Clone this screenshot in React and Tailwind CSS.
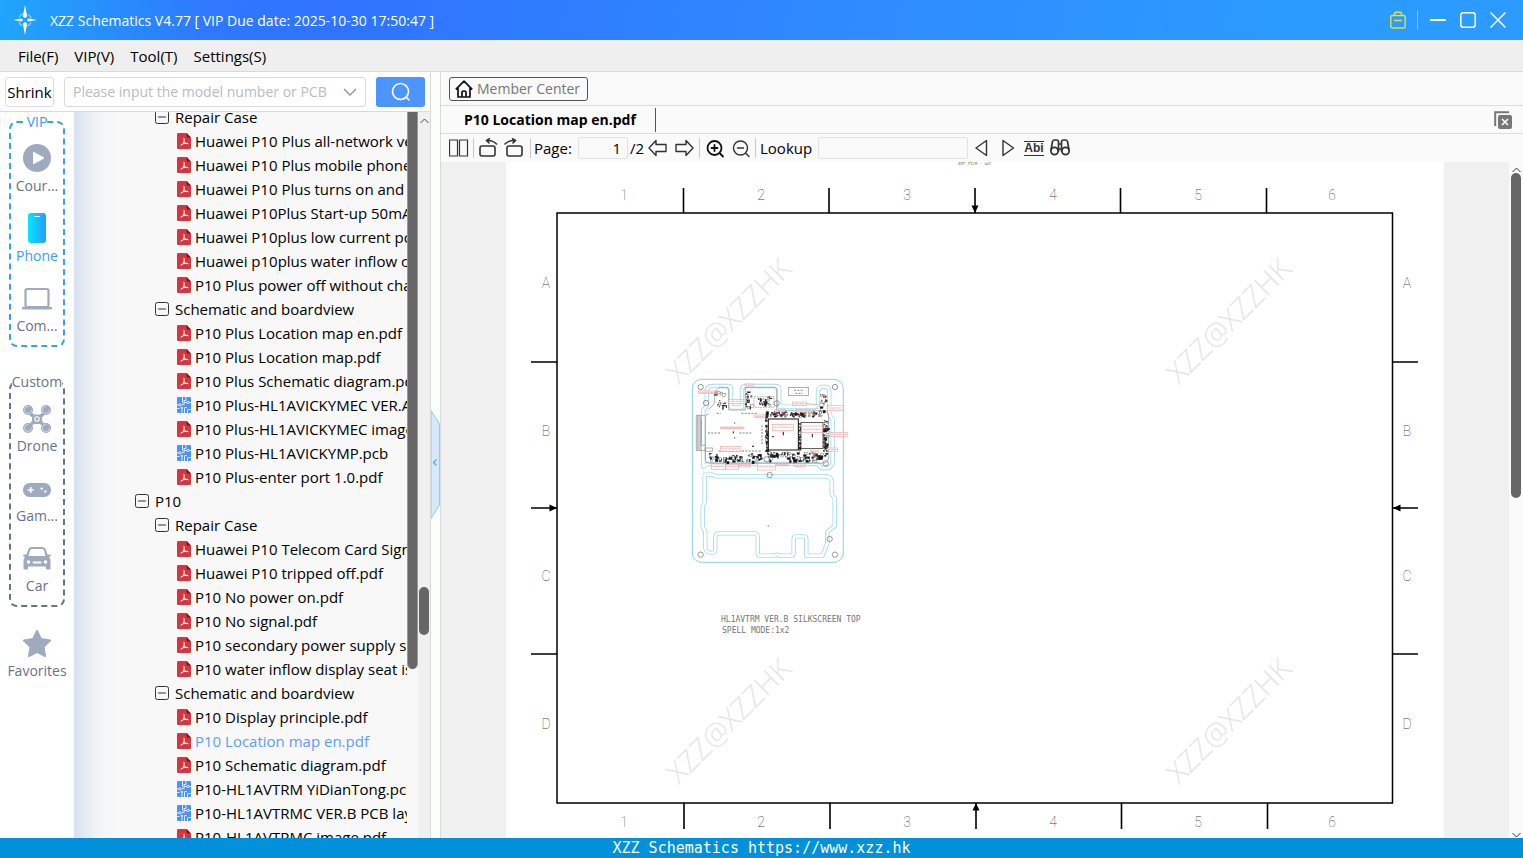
import { useState } from 'react';
import clsx from 'clsx';

const TREE = [
  { type: 'group', depth: 1, name: 'Repair Case' },
  { type: 'pdf', name: 'Huawei P10 Plus all-network version does not turn on.pdf' },
  { type: 'pdf', name: 'Huawei P10 Plus mobile phone no signal.pdf' },
  { type: 'pdf', name: 'Huawei P10 Plus turns on and then off.pdf' },
  { type: 'pdf', name: 'Huawei P10Plus Start-up 50mA.pdf' },
  { type: 'pdf', name: 'Huawei P10plus low current power on.pdf' },
  { type: 'pdf', name: 'Huawei p10plus water inflow code.pdf' },
  { type: 'pdf', name: 'P10 Plus power off without charging.pdf' },
  { type: 'group', depth: 1, name: 'Schematic and boardview' },
  { type: 'pdf', name: 'P10 Plus Location map en.pdf' },
  { type: 'pdf', name: 'P10 Plus Location map.pdf' },
  { type: 'pdf', name: 'P10 Plus Schematic diagram.pdf' },
  { type: 'pcb', name: 'P10 Plus-HL1AVICKYMEC VER.A.pcb' },
  { type: 'pdf', name: 'P10 Plus-HL1AVICKYMEC image.pdf' },
  { type: 'pcb', name: 'P10 Plus-HL1AVICKYMP.pcb' },
  { type: 'pdf', name: 'P10 Plus-enter port 1.0.pdf' },
  { type: 'group', depth: 0, name: 'P10' },
  { type: 'group', depth: 1, name: 'Repair Case' },
  { type: 'pdf', name: 'Huawei P10 Telecom Card Signal.pdf' },
  { type: 'pdf', name: 'Huawei P10 tripped off.pdf' },
  { type: 'pdf', name: 'P10 No power on.pdf' },
  { type: 'pdf', name: 'P10 No signal.pdf' },
  { type: 'pdf', name: 'P10 secondary power supply short.pdf' },
  { type: 'pdf', name: 'P10 water inflow display seat is bad.pdf' },
  { type: 'group', depth: 1, name: 'Schematic and boardview' },
  { type: 'pdf', name: 'P10 Display principle.pdf' },
  { type: 'pdf', name: 'P10 Location map en.pdf' },
  { type: 'pdf', name: 'P10 Schematic diagram.pdf' },
  { type: 'pcb', name: 'P10-HL1AVTRM YiDianTong.pcb' },
  { type: 'pcb', name: 'P10-HL1AVTRMC VER.B PCB layer.pcb' },
  { type: 'pdf', name: 'P10-HL1AVTRMC image.pdf' },
];

/* ---------- icons ---------- */

function Logo() {
  return (
    <svg width="24" height="30" viewBox="0 0 24 30" fill="#fff">
      <path d="M12 0 14.2 11.5 12 13 9.8 11.5Z" />
      <path d="M12 30 14.2 18.5 12 17 9.8 18.5Z" />
      <path d="M0 15 8.5 13.4 10 15 8.5 16.6Z" />
      <path d="M24 15 15.5 13.4 14 15 15.5 16.6Z" />
      <circle cx="12" cy="15" r="6.5" fill="none" stroke="#fff" strokeOpacity=".45" strokeWidth="1.5" strokeDasharray="5 5.2" strokeDashoffset="-2.5" />
    </svg>
  );
}

function PdfIcon() {
  return (
    <svg width="14" height="16" viewBox="0 0 14 16" className="shrink-0">
      <path d="M1.2 0H9.6L14 4.4V14.8Q14 16 12.8 16H1.2Q0 16 0 14.8V1.2Q0 0 1.2 0Z" fill="#d4373f" />
      <path d="M9.6 0 14 4.4H10.4Q9.6 4.4 9.6 3.6Z" fill="#8d0e16" />
      <path d="M7 5.2Q7.7 6.8 6.9 8.900 5.9 11.2 4 12.300M6.900 8.800Q8.200 10.700 11 10.800M4.200 11.500Q6.500 10.200 10.500 10.300" fill="none" stroke="#fff" strokeWidth="1" strokeLinecap="round" />
    </svg>
  );
}

function PcbIcon() {
  return (
    <svg width="14" height="16" viewBox="0 0 14 16" className="shrink-0">
      <rect width="14" height="16" rx="1.2" fill="#4a90ff" />
      <g fill="none" stroke="#fff" strokeWidth=".8">
        <path d="M5.500 0V5.500M9 0V3.500H7V7M0 8H2M4.300 7.500H7.500M7.500 16V10.500H10M12 5.500H14M5 16V11.500M0 11.500H2.500M10.500 16V12.500H14M7 5.500H10" />
        <circle cx="3.200" cy="7.700" r="1.100" />
        <circle cx="11" cy="5.500" r="1.100" />
        <circle cx="4.800" cy="10.900" r=".9" />
      </g>
    </svg>
  );
}

function CourseIcon() {
  return (
    <svg width="30" height="30" viewBox="0 0 30 30">
      <circle cx="15" cy="15" r="14" fill="#a0aabf" />
      <path d="M11 9.6Q11 8.4 12 9L21.6 14.3Q22.6 15 21.6 15.7L12 21Q11 21.6 11 20.4Z" fill="#fff" />
    </svg>
  );
}

function PhoneIcon() {
  return (
    <svg width="30" height="30" viewBox="0 0 30 30">
      <defs>
        <linearGradient id="phoneFill">
          <stop offset="0" stopColor="#00e8ff" />
          <stop offset="1" stopColor="#2b9bff" />
        </linearGradient>
      </defs>
      <rect x="6" y="0" width="18" height="30" rx="3" fill="url(#phoneFill)" />
      <path d="M12.8 3.5H17.2" stroke="#fff" strokeWidth="1.2" strokeLinecap="round" />
    </svg>
  );
}

function ComputerIcon() {
  return (
    <svg width="30" height="30" viewBox="0 0 30 30">
      <rect x="3.5" y="6" width="23" height="18" rx="1.5" fill="none" stroke="#a0aabf" strokeWidth="2.200" />
      <path d="M0 24H30V25.5Q30 26.5 29 26.5H1Q0 26.5 0 25.5Z" fill="#a0aabf" />
    </svg>
  );
}

function DroneIcon() {
  return (
    <svg width="30" height="30" viewBox="0 0 30 30">
      <path d="M6 7.5 12 12H18L24 7.500 25 9 19.500 14.500V18L25 24 24 25.500 18 20.500H12L6 25.500 5 24 10.500 18V14.500L5 9Z" fill="#a0aabf" stroke="#a0aabf" strokeLinejoin="round" strokeWidth="1" />
      {[[6, 7], [24, 7], [6, 25], [24, 25]].map(([x, y]) => (
        <g key={`${x}-${y}`}>
          <circle cx={x} cy={y} r="5" fill="#a0aabf" />
          <circle cx={x} cy={y} r="3.600" fill="none" stroke="#fff" strokeOpacity=".7" strokeWidth=".7" strokeDasharray="17 6" />
        </g>
      ))}
      <circle cx="15" cy="16" r="2.2" fill="none" stroke="#fff" strokeWidth="1.1" />
    </svg>
  );
}

function GameIcon() {
  return (
    <svg width="30" height="30" viewBox="0 0 30 30">
      <rect x="1" y="10" width="28" height="14" rx="6.5" fill="#a0aabf" />
      <path d="M8.7 14V20M5.7 17H11.7" stroke="#fff" strokeWidth="1.6" />
      <circle cx="19.7" cy="15.600" r="1.2" fill="#fff" />
      <circle cx="23.3" cy="18.600" r="1.2" fill="#fff" />
    </svg>
  );
}

function CarIcon() {
  return (
    <svg width="30" height="30" viewBox="0 0 30 30">
      <path d="M9.500 4H20.500Q23 4 23.800 6.500L25.500 11.500H28.500Q29.500 13.500 27 14 28.500 15.500 28.500 17.500V25.500Q28.500 26.500 27.500 26.500H25Q24 26.500 24 25.500V23.500H6V25.500Q6 26.500 5 26.500H2.500Q1.500 26.500 1.500 25.500V17.500Q1.500 15.500 3 14 .5 13.500 1.500 11.500H4.500L6.200 6.500Q7 4 9.500 4Z" fill="#a0aabf" />
      <path d="M10 6H20Q21.5 6 22 7.5L23.6 13H6.4L8 7.5Q8.5 6 10 6Z" fill="#fff" />
      <circle cx="6.5" cy="19" r="1.8" fill="#fff" />
      <circle cx="23.5" cy="19" r="1.8" fill="#fff" />
      <path d="M11.5 19.500H18.5" stroke="#fff" strokeWidth="2" strokeLinecap="round" />
    </svg>
  );
}

function StarIcon() {
  return (
    <svg width="30" height="30" viewBox="0 0 30 30">
      <path d="M15 3 19 11.1 28 12.500 21.5 18.9 23 28 15 23.8 7 28 8.5 18.9 2 12.500 11 11.1Z" fill="#a0aabf" stroke="#a0aabf" strokeWidth="2" strokeLinejoin="round" />
    </svg>
  );
}

function Stroke({ d, children, w = 20, width = 1.6, color = '#333' }) {
  return (
    <svg width={w} height="20" viewBox={`0 0 ${w} 20`} fill="none" stroke={color} strokeWidth={width} strokeLinejoin="round" strokeLinecap="round">
      {d && <path d={d} />}
      {children}
    </svg>
  );
}

/* ---------- side bar ---------- */

function Category({ label, icon, active, onClick }) {
  return (
    <button onClick={onClick} className={clsx('flex w-full flex-col items-center text-[14px]', active ? 'text-[#3d9bff]' : 'text-[#67738a]')}>
      {icon}
      <span className="h-[26px] leading-[26px]">{label}</span>
    </button>
  );
}

function SideBar() {
  const [active, setActive] = useState('Phone');
  const item = (label, icon) => (
    <Category key={label} label={label} icon={icon} active={active === label} onClick={() => setActive(label)} />
  );

  return (
    <nav className="w-[74px] shrink-0 bg-white">
      <fieldset className="mx-auto flex w-[56px] flex-col gap-[14px] rounded-[8px] border-2 border-dashed border-[#3d9bff] pt-[11px] pb-[6px]">
        <legend className="mx-auto text-[14px] leading-5 text-[#3d9bff]">VIP</legend>
        {item('Cour...', <CourseIcon />)}
        {item('Phone', <PhoneIcon />)}
        {item('Com...', <ComputerIcon />)}
      </fieldset>
      <fieldset className="mx-auto mt-[25px] flex w-[56px] flex-col gap-[14px] rounded-[8px] border-2 border-dashed border-[#67738a] pt-[11px] pb-[6px]">
        <legend className="mx-auto text-[14px] leading-5 text-[#67738a]">Custom</legend>
        {item('Drone', <DroneIcon />)}
        {item('Gam...', <GameIcon />)}
        {item('Car', <CarIcon />)}
      </fieldset>
      <div className="mt-[21px]">{item('Favorites', <StarIcon />)}</div>
    </nav>
  );
}

/* ---------- file tree ---------- */

function FileTree() {
  const [selected, setSelected] = useState('P10 Location map en.pdf');

  return (
    <div className="min-w-0 flex-1 overflow-hidden bg-[#f8f8f8] bg-[linear-gradient(90deg,#d6e1f2_0px,#e6ebf4_12px,#f3f5f8_26px,#f8f8f8_42px)]">
      <ul className="-mt-[7px]">
        {TREE.map((row, i) => (
          <li key={i} className="h-6">
            {row.type === 'group' ? (
              <button className={clsx('flex h-6 items-center gap-[6px] whitespace-nowrap', row.depth ? 'pl-[81px]' : 'pl-[61px]')}>
                <svg width="14" height="14" viewBox="0 0 14 14" fill="none" stroke="#333">
                  <rect x=".5" y=".5" width="13" height="13" rx="2" />
                  <path d="M3 7H11" />
                </svg>
                {row.name}
              </button>
            ) : (
              <button
                onClick={() => setSelected(row.name)}
                className={clsx('flex h-6 items-center gap-1 pl-[103px] whitespace-nowrap', selected === row.name && 'text-[#5b9dff]')}
              >
                {row.type === 'pdf' ? <PdfIcon /> : <PcbIcon />}
                {row.name}
              </button>
            )}
          </li>
        ))}
      </ul>
    </div>
  );
}

/* ---------- drawing ---------- */

// small repeatable generator for the component clutter on the board
function scatter(seed, count, x, y, w, h, max) {
  let s = seed;
  const rnd = () => {
    s = (s * 16807) % 2147483647;
    return s / 2147483647;
  };
  return Array.from({ length: count }, () => ({
    x: x + rnd() * w,
    y: y + rnd() * h,
    w: 2 + rnd() * max,
    h: 2 + rnd() * max,
    solid: rnd() > 0.45,
  }));
}

const PARTS = [
  ...scatter(11, 60, 88, 250, 160, 24, 7),
  ...scatter(23, 80, 262, 245, 165, 26, 8),
  ...scatter(37, 75, 256, 124, 170, 14, 6),
  ...scatter(53, 40, 256, 140, 5, 105, 5),
  ...scatter(71, 40, 354, 150, 6, 90, 5),
  ...scatter(89, 45, 430, 150, 12, 110, 6),
  ...scatter(97, 14, 196, 60, 18, 52, 8),
  ...scatter(101, 20, 234, 78, 36, 26, 6),
  ...scatter(131, 14, 104, 62, 34, 50, 7),
  ...scatter(151, 14, 420, 68, 16, 60, 7),
];

const NOTES = [
  [195, 42, 25, 9], [55, 63, 58, 8], [145, 88, 52, 12], [337, 96, 42, 10], [443, 106, 48, 16], [222, 135, 34, 8],
  [285, 119, 30, 7], [350, 119, 50, 7], [277, 163, 64, 18], [365, 168, 62, 20], [122, 171, 70, 5], [453, 187, 50, 12],
  [121, 229, 62, 15], [443, 234, 30, 10], [392, 240, 24, 10], [94, 282, 42, 16], [137, 283, 38, 15], [177, 283, 35, 8],
  [232, 281, 55, 19], [290, 281, 36, 5], [342, 281, 35, 8],
];

function Board() {
  const upper = 'M80 66Q80 48 96 48H146Q153 48 153 60V112H186V60Q186 48 198 48H288Q298 48 298 60V110H414V64Q414 50 432 50 448 50 448 64V132L458 150V282L448 294H424L414 282H84L70 290V120L80 108Z';
  const lower = 'M74 314H98L106 319H440Q455 320 455 338V372L464 385V468L442 486V520L428 557H379V508Q379 499 372 499H348Q341 499 341 508V548Q341 557 333 557H298L290 554 282 557H240Q233 557 233 548V500Q233 490 224 490H116Q106 490 106 504V540Q104 551 92 549 76 546 76 532V485L68 470V410L74 398Z';

  return (
    <g transform="translate(680 370) scale(.3333)">
      <rect x="37" y="28" width="453" height="549" rx="28" fill="none" stroke="#86d3ea" strokeWidth="3" />
      {[upper, lower].map((d) => (
        <g key={d} fill="none" strokeLinejoin="round">
          <path d={d} stroke="#9fdcee" strokeWidth="13" />
          <path d={d} stroke="#fff" strokeWidth="8" />
        </g>
      ))}
      <g fill="none" stroke="#666" strokeWidth="2">
        <circle cx="62" cy="51" r="8" />
        <circle cx="465" cy="51" r="8" />
        <circle cx="78" cy="99" r="8" />
        <circle cx="269" cy="315" r="8" />
        <circle cx="62" cy="554" r="8" />
        <circle cx="465" cy="554" r="8" />
        <circle cx="449" cy="507" r="8" />
        <circle cx="290" cy="100" r="8" />
        <circle cx="260" cy="268" r="8" />
        <circle cx="437" cy="280" r="8" />
      </g>
      <g fill="none" stroke="#888" strokeWidth="2">
        <path d="M86 132Q76 132 76 142V268Q76 280 88 280H424Q446 280 446 262V140Q446 122 432 122H290V60Q290 52 280 52H196V120H146V60Q146 52 136 52H118L104 66V100L86 118" />
        <rect x="325" y="52" width="60" height="24" />
        <path d="M49 136V242M53 136V242M57 136V242M61 136V242M49 136H75M49 242H75M64 146V226H75M86 234H98V244H76V234Z" />
        <path d="M222 80H282V112H222Z" strokeDasharray="5 3" />
      </g>
      <path d="M342 61H368M346 70H368M84 189H122M178 189H218M164 156V162M164 201V207M246 166V224M184 130H230M110 130H122M116 243H246" stroke="#444" strokeWidth="2" strokeDasharray="6 4" />
      {PARTS.map((p, i) => (
        <rect key={i} x={p.x} y={p.y} width={p.w} height={p.h} fill={p.solid ? '#111' : '#fff'} stroke="#333" strokeWidth="1" />
      ))}
      <rect x="265" y="147" width="90" height="93" fill="#fff" stroke="#111" strokeWidth="3" />
      <rect x="363" y="157" width="66" height="78" fill="#fff" stroke="#111" strokeWidth="2" />
      <path d="M310 186V196M397 192V202M160 184V190M216 229H222M276 200H282" stroke="#111" strokeWidth="3" />
      {NOTES.map(([x, y, w, h]) => (
        <g key={`${x}-${y}`} stroke="#f58a8a">
          <rect x={x} y={y} width={w} height={h} fill="#fff" fillOpacity=".6" strokeWidth="1.5" />
          <path d={`M${x + 3} ${y + h / 2}H${x + w - 3}`} strokeWidth="3" strokeOpacity=".7" strokeDasharray="4 1" />
        </g>
      ))}
      <path d="M113 67 122 80M197 94H206M308 181V190M378 100 420 105M400 122 420 104" stroke="#f58a8a" strokeWidth="1.5" />
      <path d="M262 468H268M265 465V471" stroke="#ff6fb5" strokeWidth="2" />
    </g>
  );
}

const COLUMNS = [[1, 624], [2, 761], [3, 907], [4, 1053], [5, 1198], [6, 1332]];
const ROWS = [['A', 283], ['B', 431], ['C', 576], ['D', 724]];

function Drawing() {
  return (
    <svg width="938" height="676" viewBox="506 162 938 676" className="shrink-0 bg-white">
      <g fontFamily="Open Sans, sans-serif" fontSize="29" fontWeight="300" fill="#e6e6e6">
        {[[679, 385], [1179, 385], [679, 785], [1179, 785]].map(([x, y]) => (
          <text key={`${x}-${y}`} transform={`translate(${x} ${y}) rotate(-45)`}>XZZ@XZZHK</text>
        ))}
      </g>

      <rect x="557" y="213" width="835.5" height="590" fill="none" stroke="#000" strokeWidth="1.5" />
      <path
        d="M683.5 188V213M829 188V213M975 188V213M1120.5 188V213M1266.5 188V213M684 803V829M830 803V829M976 803V829M1121.5 803V829M1267.5 803V829M531 362H557M531 508H557M531 654H557M1392 362H1418M1392 508H1418M1392 654H1418"
        stroke="#000"
        strokeWidth="1.6"
      />
      <path d="M971.5 205.5H978.5L975 213ZM972.5 810.5H979.5L976 803ZM549.5 504.5V511.5L557 508ZM1400.500 504.5V511.5L1393 508Z" />

      <g fontFamily="Roboto, sans-serif" fontWeight="100" fontSize="14" fill="#444" textAnchor="middle">
        {COLUMNS.map(([n, x]) => (
          <g key={n}>
            <text x={x} y="200">{n}</text>
            <text x={x} y="827">{n}</text>
          </g>
        ))}
        {ROWS.map(([n, y]) => (
          <g key={n}>
            <text x="546" y={y + 5}>{n}</text>
            <text x="1407" y={y + 5}>{n}</text>
          </g>
        ))}
      </g>

      <Board />

      <g fontFamily="DejaVu Sans Mono, monospace" fill="#777">
        <text x="721" y="622" fontSize="8">HL1AVTRM VER.B SILKSCREEN TOP</text>
        <text x="722" y="633" fontSize="8">SPELL MODE:1x2</text>
        <text x="958" y="165" fontSize="4">ART FILM - adt</text>
      </g>
    </svg>
  );
}

/* ---------- viewer ---------- */

function ToolButton({ label, children }) {
  return (
    <button aria-label={label} className="flex h-5 w-5 items-center justify-center">
      {children}
    </button>
  );
}

function Divider() {
  return <span className="h-5 w-px bg-[#c8c8c8]" />;
}

function ViewerToolbar() {
  return (
    <div className="flex h-7 items-center bg-[#fafafa] pl-2 leading-5">
      <ToolButton label="Two pages"><Stroke width={1.2} d="M.5 2H8.500V18H.5ZM10.500 2H18.500V18H10.500Z" /></ToolButton>
      <span className="mx-1 flex"><Divider /></span>
      <div className="flex items-center gap-[6px]">
        <ToolButton label="Rotate left"><Stroke d="M4 8H15Q17 8 17 10V16Q17 18 15 18H4Q2 18 2 16V10Q2 8 4 8ZM18.500 6Q14.500 2 9 2.500M11.500 .8 8.500 2.500 11 5" /></ToolButton>
        <ToolButton label="Rotate right"><Stroke d="M5 8H16Q18 8 18 10V16Q18 18 16 18H5Q3 18 3 16V10Q3 8 5 8ZM1 6Q5 2 11 2.500M8.500 .8 11.500 2.500 9 5" /></ToolButton>
        <Divider />
      </div>
      <label htmlFor="page" className="ml-[3px] w-11 whitespace-nowrap">Page:</label>
      <input id="page" defaultValue="1" className="h-[22px] w-[50px] rounded-[2px] border border-[#e2e2e2] bg-[#fafafa] px-[6px] text-right" />
      <span className="ml-[2px] w-[18px] whitespace-nowrap">/2</span>
      <div className="flex items-center gap-[6px]">
        <ToolButton label="Previous page"><Stroke width={1.4} d="M1 10 8 2.500V6.500H18V13.500H8V17.500Z" /></ToolButton>
        <ToolButton label="Next page"><Stroke width={1.4} d="M19 10 12 2.500V6.500H2V13.500H12V17.500Z" /></ToolButton>
      </div>
      <span className="mx-[5px] flex"><Divider /></span>
      <div className="flex items-center gap-[6px]">
        <ToolButton label="Zoom in">
          <Stroke color="#111" width={1.8} d="M15 15.500 18 18.500M6.500 10H12.500M9.500 7V13"><circle cx="9.500" cy="10" r="7" /></Stroke>
        </ToolButton>
        <ToolButton label="Zoom out">
          <Stroke width={1.4} d="M15 15.500 18 18.500M6.500 10H12.500"><circle cx="9.500" cy="10" r="7" /></Stroke>
        </ToolButton>
      </div>
      <span className="mx-[4px] flex"><Divider /></span>
      <label htmlFor="lookup" className="w-[58px] whitespace-nowrap">Lookup</label>
      <input id="lookup" className="mr-[4px] h-[22px] w-[150px] rounded-[2px] border border-[#e2e2e2] bg-[#fafafa] px-1" />
      <div className="flex items-center gap-[6px]">
        <ToolButton label="Find previous"><Stroke width={1.4} d="M14.500 2.500V17.500L4 10Z" /></ToolButton>
        <ToolButton label="Find next"><Stroke width={1.4} d="M5 2.500V17.500L15.500 10Z" /></ToolButton>
        <button className="h-[15px] w-5 border-y border-[#333] font-['Liberation_Sans'] text-[12px] leading-[13px] font-bold text-[#333]">Abi</button>
        <ToolButton label="Search all files">
          <Stroke width={1.7}>
            <circle cx="4.500" cy="13" r="3.600" />
            <circle cx="15.500" cy="13" r="3.600" />
            <path d="M1 12 2.500 3.500Q3 2 4.500 2H6.500Q8.500 2 8.500 4V13M19 12 17.500 3.500Q17 2 15.500 2H13.500Q11.500 2 11.500 4V13M8.500 6H11.500M8.500 11H11.500" />
          </Stroke>
        </ToolButton>
      </div>
    </div>
  );
}

function Viewer() {
  return (
    <main className="flex min-w-0 flex-1 flex-col border-l border-[#d9d9d9] bg-[#fafafa]">
      <div className="flex h-[34px] shrink-0 items-center border-b border-[#dcdcdc] pl-2">
        <button className="flex h-6 w-[139px] items-center gap-1 rounded-[3px] border border-[#555] pl-[5px] text-[14px] whitespace-nowrap text-[#777]">
          <svg width="18" height="18" viewBox="0 0 18 18" fill="none" stroke="#111" strokeWidth="1.700" strokeLinejoin="round" className="shrink-0">
            <path d="M.8 9.300 9 1.200 17.200 9.300M3 8V17H15V8M7 17V12.500Q7 11 9 11 11 11 11 12.500V17" />
          </svg>
          Member Center
        </button>
      </div>
      <div className="flex h-7 shrink-0 items-center justify-between border-b border-[#dcdcdc]">
        <div role="tab" className="flex h-6 w-[215px] items-center border-r border-[#555] pl-[23px] text-[14px] leading-5 font-bold whitespace-nowrap">P10 Location map en.pdf</div>
        <button aria-label="Close all" className="mr-[11px]">
          <svg width="18" height="18" viewBox="0 0 18 18">
            <path d="M1.200 15V1.200H15" fill="none" stroke="#777" strokeWidth="2" />
            <rect x="4" y="4" width="14" height="14" rx="2" fill="#777" />
            <path d="M8 8 14 14M14 8 8 14" stroke="#fff" strokeWidth="1.600" />
          </svg>
        </button>
      </div>
      <ViewerToolbar />
      <div className="flex min-h-0 flex-1 bg-[#f0f0f0]">
        <div className="flex min-w-0 flex-1 justify-center overflow-hidden">
          <Drawing />
        </div>
        <div className="flex w-[14px] shrink-0 flex-col items-center bg-[#fafafa] pt-1">
          <svg width="9" height="7" viewBox="0 0 9 7" fill="none" stroke="#333"><path d="M.5 6 4.500 2 8.500 6" /></svg>
          <div className="h-[325px] w-[10px] rounded-full bg-[#666]" />
          <svg width="9" height="7" viewBox="0 0 9 7" fill="none" stroke="#333" className="mt-auto"><path d="M.5 2 4.500 6 8.500 2" /></svg>
        </div>
      </div>
    </main>
  );
}

/* ---------- app ---------- */

export default function App() {
  return (
    <div className="flex h-screen flex-col overflow-hidden bg-white font-['Open_Sans',sans-serif] text-[15px] text-black">
      <header className="flex h-10 shrink-0 items-center bg-[linear-gradient(100deg,#1fa6fb_0%,#2f78ff_14%,#2f73ff_22%,#2f8aff_55%,#2b9bff_85%,#2b9bff_100%)] pr-[17px] pl-[13px] text-white">
        <Logo />
        <h1 className="ml-[13px] text-[14px] whitespace-nowrap">XZZ Schematics V4.77 [ VIP Due date: 2025-10-30 17:50:47 ]</h1>
        <button aria-label="Toolbox" className="ml-auto">
          <svg width="16" height="18" viewBox="0 0 16 18" fill="none" stroke="#e3e03a" strokeWidth="1.400">
            <rect x=".8" y="4.500" width="14.400" height="12.500" rx="1.500" />
            <path d="M4.500 4.500V2.500Q4.500 1.200 6 1.200H10Q11.500 1.200 11.500 2.500V4.500M4 9.500H12" />
          </svg>
        </button>
        <span className="mr-3 ml-[11px] h-5 w-px bg-white/40" />
        <div className="flex gap-[14px]">
          <button aria-label="Minimize"><svg width="16" height="16" stroke="#fff" strokeWidth="2"><path d="M0 8H16" /></svg></button>
          <button aria-label="Maximize"><svg width="16" height="16" fill="none" stroke="#fff" strokeWidth="1.500"><rect x=".8" y=".8" width="14.400" height="14.400" rx="2.500" /></svg></button>
          <button aria-label="Close"><svg width="16" height="16" stroke="#fff" strokeWidth="1.500"><path d="M.5 .5 15.500 15.500M15.500 .5 .5 15.500" /></svg></button>
        </div>
      </header>

      <div className="flex h-8 shrink-0 items-center gap-4 border-b border-[#d9d9d9] bg-[#efefef] pt-[2px] pl-[18px] whitespace-nowrap">
        <button>File(F)</button>
        <button>VIP(V)</button>
        <button>Tool(T)</button>
        <button>Settings(S)</button>
      </div>

      <div className="flex min-h-0 flex-1">
        <aside className="flex w-[431px] shrink-0 flex-col border-r border-[#d9d9d9]">
          <div className="flex h-10 shrink-0 items-center border-b border-[#d9d9d9] pl-[5px]">
            <button className="h-[30px] w-[49px] rounded-[3px] border border-[#dcdcdc] pt-px whitespace-nowrap">Shrink</button>
            <div className="relative ml-[10px]">
              <input
                aria-label="Model number"
                placeholder="Please input the model number or PCB"
                className="h-[30px] w-[302px] rounded-[3px] border border-[#d9d9d9] pr-[24px] pl-2 text-[14px] placeholder:text-[#b8bcc4]"
              />
              <svg width="14" height="8" viewBox="0 0 14 8" fill="none" stroke="#999" strokeWidth="1.500" className="absolute top-[11px] right-[9px]">
                <path d="M1 1 7 7 13 1" />
              </svg>
            </div>
            <button aria-label="Search" className="ml-[10px] flex h-[30px] w-[49px] items-center justify-center rounded-[3px] bg-[#4d94ff]">
              <svg width="20" height="20" viewBox="0 0 20 20" fill="none" stroke="#fff" strokeWidth="1.600" strokeLinecap="round">
                <circle cx="9.500" cy="9.500" r="8" />
                <path d="M15.500 15.500 18 18" />
              </svg>
            </button>
          </div>
          <div className="flex min-h-0 flex-1">
            <SideBar />
            <FileTree />
            <div className="w-[11px] shrink-0 bg-[#f8f8f8]">
              <div className="h-[557px] rounded-b-full border-x border-[#999] bg-[#666]" />
            </div>
            <div className="flex w-3 shrink-0 flex-col items-center bg-[#f0f0f0] pt-[5px]">
              <svg width="9" height="7" viewBox="0 0 9 7" fill="none" stroke="#444"><path d="M.5 6 4.500 2 8.500 6" /></svg>
              <div className="mt-[463px] h-12 w-[10px] rounded-full bg-[#666]" />
            </div>
          </div>
        </aside>

        <div className="relative w-[9px] shrink-0 bg-[#fafffa]">
          <button aria-label="Collapse panel" className="absolute top-[338px] left-0">
            <svg width="9" height="109" viewBox="0 0 9 109">
              <path d="M0 .5 8.500 14V95L0 108.500Z" fill="#d6eaff" stroke="#90cbff" />
              <path d="M5.500 49.500 2.500 52.500 5.500 55.500" fill="none" stroke="#4aa8f5" strokeWidth="1.200" />
            </svg>
          </button>
        </div>

        <Viewer />
      </div>

      <footer className="h-5 shrink-0 bg-[#0290da] text-center font-['DejaVu_Sans_Mono',monospace] text-[15px] leading-5 text-white">
        XZZ Schematics https://www.xzz.hk
      </footer>
    </div>
  );
}
